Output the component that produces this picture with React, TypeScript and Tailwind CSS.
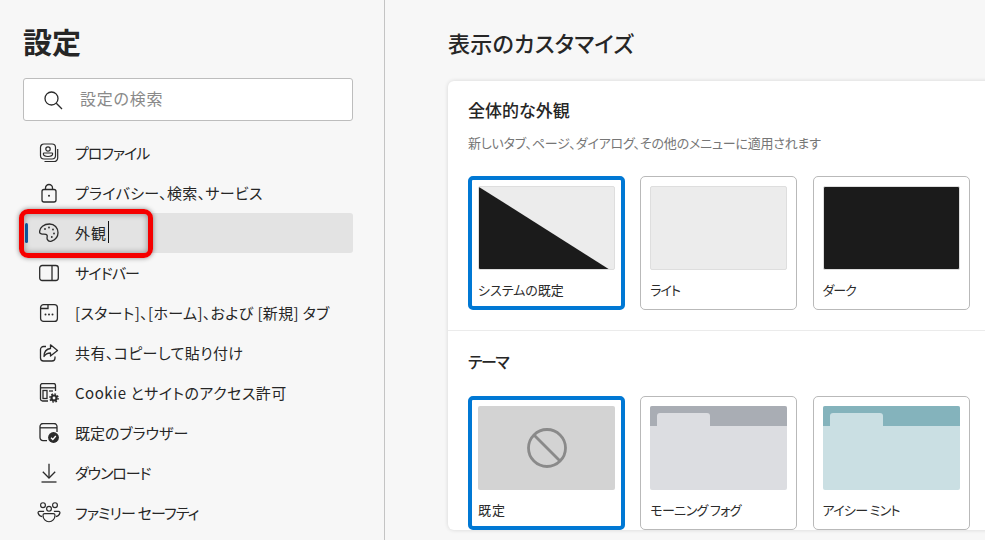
const font = `[font-family:"Noto_Sans_CJK_JP","Liberation_Sans",sans-serif] [font-feature-settings:"palt"]`;

const Profile = () => (
  <svg viewBox="0 0 20 20" className="w-5 h-5" fill="none" stroke="#2b2b2b" strokeWidth="1.2">
    <rect x="1.500" y="1" width="15" height="15" rx="3.500" />
    <circle cx="9" cy="6" r="2.200" />
    <path d="M5 10h8a.6.6 0 0 1 .6.6v.5c0 1.500-2 2.400-4.600 2.400s-4.600-.9-4.600-2.400v-.5A.6.6 0 0 1 5 10z" />
    <path d="M18.700 6v9a3.500 3.500 0 0 1-3.500 3.500H5.500" />
  </svg>
);
const Lock = () => (
  <svg viewBox="0 0 20 20" className="w-5 h-5" fill="none" stroke="#2b2b2b" strokeWidth="1.300">
    <rect x="3" y="6.500" width="14" height="12.500" rx="2" />
    <path d="M6.500 6.500V5a3.500 3.500 0 0 1 7 0v1.500" />
    <circle cx="10" cy="12.800" r="1" fill="#2b2b2b" stroke="none" />
  </svg>
);
const Palette = () => (
  <svg viewBox="0 0 20 20" className="w-5 h-5" fill="none" stroke="#2b2b2b" strokeWidth="1.300">
    <path d="M10.500 1C5 1 .6 4.500.6 8.800c0 1.500 1.300 2.400 3 2.300 2-.1 3.700-.3 4.400 1 .7 1.300-.5 2.700.3 4.300.8 1.700 2.500 2.300 4.300 1.700 3.700-1.300 6.400-4.500 6.400-8.300C19 4.800 15.500 1 10.500 1z" />
    <circle cx="6" cy="6" r=".9" fill="#2b2b2b" stroke="none" />
    <circle cx="10" cy="4.500" r=".9" fill="#2b2b2b" stroke="none" />
    <circle cx="14" cy="6.500" r=".9" fill="#2b2b2b" stroke="none" />
    <circle cx="15" cy="10.500" r=".9" fill="#2b2b2b" stroke="none" />
    <circle cx="12.800" cy="14" r=".9" fill="#2b2b2b" stroke="none" />
  </svg>
);
const Sidebar = () => (
  <svg viewBox="0 0 20 20" className="w-5 h-5" fill="none" stroke="#2b2b2b" strokeWidth="1.300">
    <rect x=".7" y="2.500" width="18.600" height="15" rx="2.500" />
    <path d="M13 2.500v15" />
  </svg>
);
const StartTab = () => (
  <svg viewBox="0 0 20 20" className="w-5 h-5" fill="none" stroke="#2b2b2b" strokeWidth="1.300">
    <rect x="1.600" y="1.600" width="16.800" height="16.800" rx="3" />
    <path d="M1.600 5.500h7.400V1.600" />
    <circle cx="6.500" cy="11.500" r="1" fill="#2b2b2b" stroke="none" />
    <circle cx="10" cy="11.500" r="1" fill="#2b2b2b" stroke="none" />
    <circle cx="13.500" cy="11.500" r="1" fill="#2b2b2b" stroke="none" />
  </svg>
);
const Share = () => (
  <svg viewBox="0 0 20 20" className="w-5 h-5" fill="none" stroke="#2b2b2b" strokeWidth="1.300">
    <path d="M7 3.500H4.500a3 3 0 0 0-3 3v8.500a3 3 0 0 0 3 3h8.500a3 3 0 0 0 3-3v-1.500" />
    <path d="M11.500 1.800l7 5.700-7 5.500V10c-3 0-5 .9-6.500 3.500 0-4.500 2.500-7.500 6.500-8z" strokeLinejoin="round" />
  </svg>
);
const Cookie = () => (
  <svg viewBox="0 0 20 20" className="w-5 h-5" fill="none" stroke="#2b2b2b" strokeWidth="1.300">
    <path d="M9 18H3.500a2 2 0 0 1-2-2V2.500a2 2 0 0 1 2-2h11a2 2 0 0 1 2 2V8" />
    <path d="M1.500 4.800h15" />
    <rect x="4" y="7.500" width="4" height="8" />
    <path d="M10 8h4" />
    <circle cx="15" cy="15" r="2.500" strokeWidth="2.200" />
    <circle cx="15" cy="15" r="4.100" strokeWidth="1.400" strokeDasharray="1.700 1.500" />
  </svg>
);
const DefaultBrowser = () => (
  <svg viewBox="0 0 20 20" className="w-5 h-5" fill="none" stroke="#2b2b2b" strokeWidth="1.300">
    <path d="M8 17.600H4a3 3 0 0 1-3-3V3.500a3 3 0 0 1 3-3h11a3 3 0 0 1 3 3V9" />
    <path d="M1 4.800h17" />
    <circle cx="14.500" cy="14.500" r="5.400" fill="#2b2b2b" stroke="none" />
    <path d="M12 14.800l1.800 1.700 3-3.500" stroke="#fff" strokeWidth="1.300" />
  </svg>
);
const Download = () => (
  <svg viewBox="0 0 20 20" className="w-5 h-5" fill="none" stroke="#2b2b2b" strokeWidth="1.300">
    <path d="M10 .8v14" />
    <path d="M3.800 8.800l6.200 6.200 6.200-6.200" />
    <path d="M2.500 19h15" />
  </svg>
);
const Family = () => (
  <svg viewBox="0 0 22 20" className="w-[24px] h-[22px] shrink-0" fill="none" stroke="#2b2b2b" strokeWidth="1.100">
    <circle cx="5.500" cy="2.800" r="2.200" />
    <circle cx="16.500" cy="2.800" r="2.200" />
    <circle cx="11" cy="6.200" r="2.200" />
    <path d="M6.500 8.500H2.300c-.9 0-1.500.7-1.300 1.500.4 1.700 1.800 3 3.800 3.300" />
    <path d="M15.500 8.500h4.200c.9 0 1.500.7 1.300 1.500-.4 1.700-1.800 3-3.800 3.300" />
    <path d="M7 10.500h8c.9 0 1.500.7 1.500 1.500 0 3.500-2.500 6-5.500 6s-5.500-2.500-5.500-6c0-.8.6-1.500 1.500-1.500z" />
  </svg>
);

const navItems = [
  { label: "プロファイル", icon: <Profile />, track: "tracking-[-1px]" },
  { label: "プライバシー、検索、サービス", icon: <Lock />, track: "tracking-[0.3px]" },
  { label: "外観", icon: <Palette />, active: true, track: "tracking-[1px]" },
  { label: "サイドバー", icon: <Sidebar />, track: "tracking-[-0.8px]" },
  { label: "[スタート]、[ホーム]、および [新規] タブ", icon: <StartTab />, track: "tracking-[0.35px]" },
  { label: "共有、コピーして貼り付け", icon: <Share />, track: "tracking-[0.4px]" },
  { label: "Cookie とサイトのアクセス許可", icon: <Cookie />, track: "tracking-[0.5px]" },
  { label: "既定のブラウザー", icon: <DefaultBrowser />, track: "" },
  { label: "ダウンロード", icon: <Download />, track: "tracking-[-1.1px]" },
  { label: "ファミリー セーフティ", icon: <Family />, track: "tracking-[-0.8px]" },
];

const Tile = ({ label, selected, track = "", children }: { label: string; selected?: boolean; track?: string; children: React.ReactNode }) => (
  <div
    className={
      selected
        ? "w-[157px] h-[134px] rounded-[5px] border-[4px] border-[#0078d4] p-[6px] bg-white"
        : "w-[157px] h-[134px] rounded-[5px] border border-[#b9b9b9] p-[9px] bg-white"
    }
  >
    {children}
    <div className={`mt-[10px] text-[13px] leading-[20px] text-[#2b2b2b] ${track}`}>{label}</div>
  </div>
);

const FolderPreview = ({ bar, body }: { bar: string; body: string }) => (
  <div className={`h-[84px] rounded-[2px] overflow-hidden ${body}`}>
    <div className={`h-[20px] pt-[7px] pl-[7px] ${bar}`}>
      <div className={`w-[53px] h-[13px] rounded-t-[3px] ${body}`} />
    </div>
  </div>
);

export default function App() {
  return (
    <div className={`flex w-[985px] h-[540px] overflow-hidden bg-[#f7f7f7] text-[#262626] ${font}`}>
      <aside className="w-[385px] shrink-0 h-full border-r border-[#c4c4c4] pl-[23px] pr-[31px] relative">
        <h1 className="mt-[21px] text-[29px] leading-[40px] font-bold text-[#262626]">設定</h1>
        <div className="mt-[17px] h-[43px] bg-white border border-[#bdbdbd] rounded-[3px] flex items-center pl-[19px] gap-[17px]">
          <svg viewBox="0 0 20 20" className="w-5 h-5" fill="none" stroke="#2b2b2b" strokeWidth="1.300">
            <circle cx="8.500" cy="8.500" r="6.500" />
            <path d="M13.300 13.300l5.700 5.700" />
          </svg>
          <span className="text-[16px] tracking-[0.8px] pb-[4px] text-[#8a8a8a]">設定の検索</span>
        </div>
        <nav className="mt-[12px]">
          {navItems.map((item) => (
            <div
              key={item.label}
              className={`relative h-[40px] flex items-center pl-[16px] text-[15px] ${item.active ? "bg-[#e3e3e3] rounded-[3px]" : ""}`}
            >
              {item.active && <span className="absolute left-[2px] top-[10px] w-[3px] h-[20px] rounded bg-[#0f5ea8]" />}
              <span className="w-[20px] flex justify-center shrink-0">{item.icon}</span>
              <span className={`ml-[16px] relative whitespace-nowrap ${item.track}`}>
                {item.label}
                {item.active && <span className="absolute right-[-2px] top-[-1px] w-px h-[22px] bg-[#111]" />}
              </span>
            </div>
          ))}
        </nav>
        <div className="absolute left-[19px] top-[209px] w-[134px] h-[49px] rounded-[9px] border-[5px] border-[#f50000] shadow-[0_0_5px_rgba(0,0,0,0.45),inset_0_0_6px_rgba(0,0,0,0.4)]" />
      </aside>

      <main className="flex-1 pl-[63px] min-w-0">
        <h2 className="mt-[25px] text-[22px] leading-[34px] font-medium tracking-[0.3px] text-[#262626]">表示のカスタマイズ</h2>
        <section className="mt-[22px] w-[600px] bg-white rounded-l-[6px] shadow-[0_0_4px_rgba(0,0,0,0.14)]">
          <div className="pl-[20px] pt-[17px] pb-[20px] border-b border-[#ebebeb]">
            <h3 className="text-[17px] leading-[24px] font-medium">全体的な外観</h3>
            <p className="mt-[11px] text-[13px] leading-[20px] tracking-[-0.2px] text-[#767676]">新しいタブ、ページ、ダイアログ、その他のメニューに適用されます</p>
            <div className="mt-[23px] flex gap-[15.25px]">
              <Tile label="システムの既定" selected>
                <div className="h-[84px] rounded-[2px] border border-[#dedede] overflow-hidden bg-[#ececec]">
                  <svg viewBox="0 0 100 100" preserveAspectRatio="none" className="w-full h-full block">
                    <polygon points="0,0 96,100 0,100" fill="#1b1b1b" />
                  </svg>
                </div>
              </Tile>
              <Tile label="ライト" track="tracking-[-1px]">
                <div className="h-[84px] rounded-[2px] border border-[#dedede] bg-[#ececec]" />
              </Tile>
              <Tile label="ダーク" track="tracking-[-1px]">
                <div className="h-[84px] rounded-[2px] border border-[#dedede] bg-[#1b1b1b]" />
              </Tile>
            </div>
          </div>
          <div className="pl-[20px] pt-[18px]">
            <h3 className="text-[16px] leading-[24px] font-medium tracking-[-1.5px]">テーマ</h3>
            <div className="mt-[23px] flex gap-[15.25px]">
              <Tile label="既定" selected track="tracking-[1px]">
                <div className="h-[84px] rounded-[2px] bg-[#d3d3d3] flex items-center justify-center">
                  <svg viewBox="0 0 40 40" className="w-[40px] h-[40px]" fill="none" stroke="#8a8a8a" strokeWidth="2.800">
                    <circle cx="20" cy="20" r="18.500" />
                    <path d="M7 7l26 26" />
                  </svg>
                </div>
              </Tile>
              <Tile label="モーニング フォグ" track="tracking-[-0.6px]">
                <FolderPreview bar="bg-[#a9adb4]" body="bg-[#dcdde1]" />
              </Tile>
              <Tile label="アイシー ミント" track="tracking-[-0.7px]">
                <FolderPreview bar="bg-[#84b3bc]" body="bg-[#cadfe3]" />
              </Tile>
            </div>
          </div>
        </section>
      </main>
    </div>
  );
}
